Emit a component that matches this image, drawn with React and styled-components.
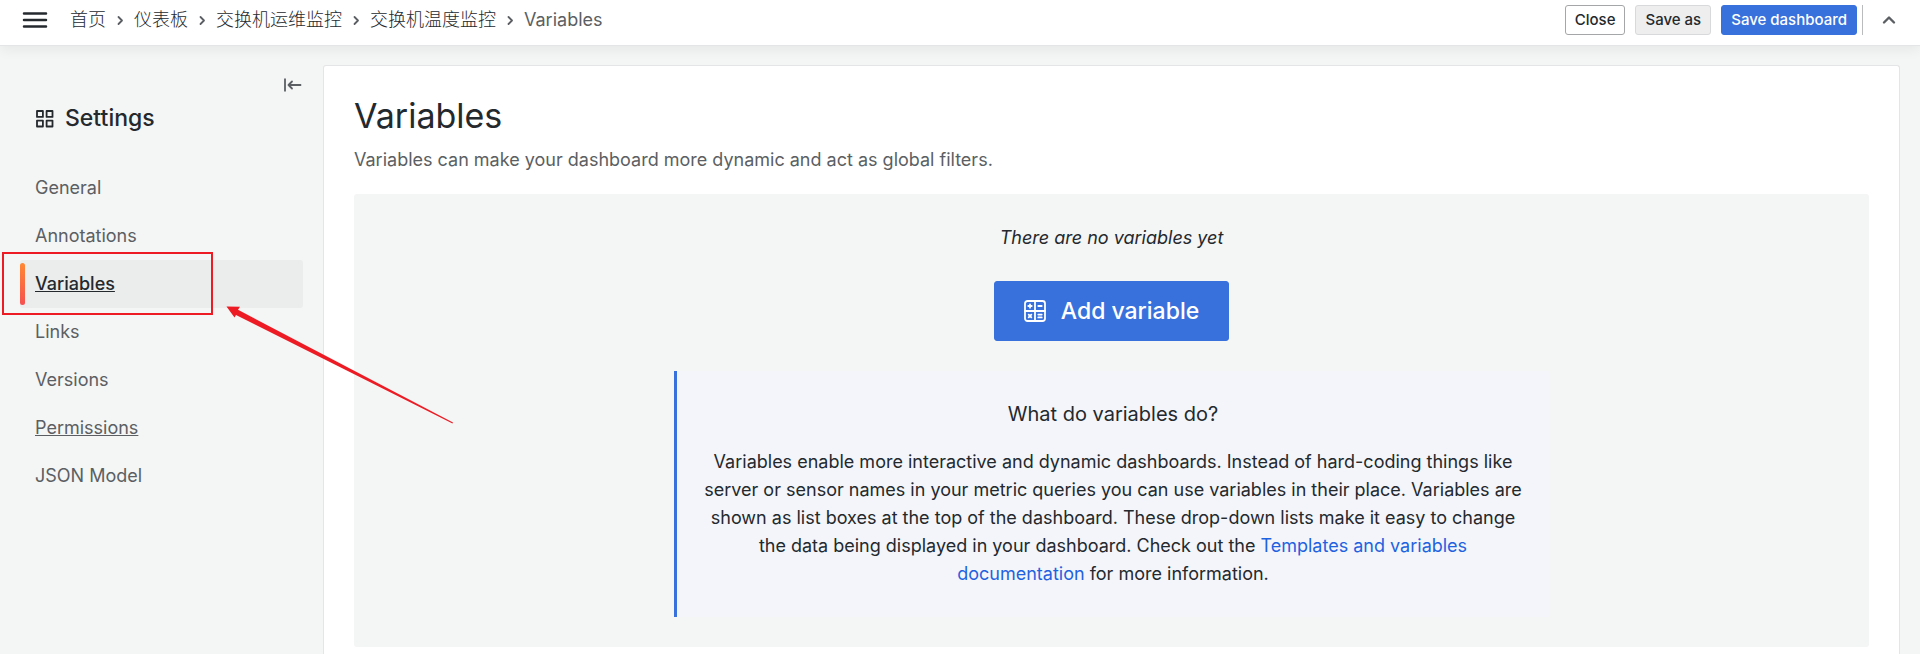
import React from "react";
import styled, { createGlobalStyle } from "styled-components";

const GlobalStyle = createGlobalStyle`
  *, *::before, *::after { box-sizing: border-box; }
  body {
    margin: 0;
    background: #f4f5f5;
    color: #24292e;
    font-family: Inter, "Noto Sans CJK SC", sans-serif;
    font-size: 18px;
    line-height: 28px;
  }
  button { font: inherit; color: inherit; cursor: pointer; }
  h1, h2, h3, p, ul, ol { margin: 0; padding: 0; font-weight: 400; }
  ul, ol { list-style: none; }
`;

const Page = styled.div`
  display: flex;
  flex-direction: column;
  min-height: 100vh;
`;

const TopBar = styled.header`
  position: relative;
  display: flex;
  align-items: center;
  justify-content: space-between;
  height: 46px;
  padding: 0 24px 5px 20px;
  background: #fff;
  border-bottom: 1px solid #e4e5e6;
  box-shadow: 0 4px 12px rgba(0, 0, 0, 0.06);
`;

const IconButton = styled.button`
  display: flex;
  align-items: center;
  justify-content: center;
  padding: 0;
  border: 0;
  background: none;
  color: ${(p) => (p.$muted ? "#5b5f63" : "#24292e")};
`;

const BarGroup = styled.div`
  display: flex;
  align-items: center;
  gap: ${(p) => p.$gap}px;
`;

const Crumbs = styled.ol`
  display: flex;
  align-items: center;
`;

const Crumb = styled.li`
  display: flex;
  align-items: center;
  color: ${(p) => (p.$current ? "#5b5f63" : "#24292e")};
  a { color: inherit; font-weight: 300; text-decoration: none; }
  svg { margin: 0 9px; color: #5b5f63; }
`;

const variants = {
  outline: "background: #fff; border-color: #a4a6a8;",
  secondary: "background: #eeeeee; border-color: #d8d9da;",
  primary: "background: #3871dc; border-color: #3871dc; color: #fff;",
};

const Button = styled.button`
  display: inline-flex;
  align-items: center;
  justify-content: center;
  gap: 15px;
  height: ${(p) => (p.$large ? 60 : 30)}px;
  padding: 0 ${(p) => (p.$large ? 29 : 9)}px;
  border: 1px solid;
  border-radius: 3px;
  font-size: ${(p) => (p.$large ? 23 : 15)}px;
  font-weight: 500;
  ${(p) => variants[p.$variant]}
`;

const Divider = styled.span`
  width: 1px;
  height: 30px;
  margin: 0 19px 0 5px;
  background: #b9bbbc;
`;

const Body = styled.div`
  flex: 1;
  display: flex;
  padding: 19px 20px 0 0;
`;

const Sidebar = styled.aside`
  flex: 0 0 323px;
  padding: 10px 20px 0;
`;

const SidebarTop = styled.div`
  display: flex;
  justify-content: flex-end;
  height: 20px;
`;

const SidebarTitle = styled.h2`
  display: flex;
  align-items: center;
  gap: 11px;
  margin: 9px 0 32px;
  padding-left: 15px;
  font-size: 23px;
  font-weight: 500;
`;

const NavItem = styled.li`
  position: relative;
  display: flex;
  align-items: center;
  height: 48px;
  padding-left: 15px;
  border-radius: 3px;
  background: ${(p) => (p.$active ? "#ebecec" : "transparent")};
`;

const NavLink = styled.a`
  font-weight: ${(p) => (p.$active ? 500 : 400)};
  color: ${(p) => (p.$active ? "#24292e" : "#5b5f63")};
  text-decoration: ${(p) => (p.$underlined ? "underline" : "none")};
`;

const ActiveBar = styled.span`
  position: absolute;
  left: 0;
  top: 3px;
  bottom: 3px;
  width: 5px;
  border-radius: 3px;
  background: linear-gradient(#ff8833, #f55050);
`;

const Markup = styled.svg`
  position: absolute;
  left: -18px;
  top: -8px;
  z-index: 1;
  pointer-events: none;
`;

const Panel = styled.main`
  flex: 1;
  min-width: 0;
  padding: 30px 30px 0;
  background: #fff;
  border: 1px solid #e4e5e6;
  border-bottom: 0;
  border-radius: 3px 3px 0 0;
`;

const Title = styled.h1`
  font-size: 34px;
  line-height: 40px;
`;

const Subtitle = styled.p`
  margin: 10px 0 20px;
  color: #5b5f63;
`;

const EmptyState = styled.section`
  display: flex;
  flex-direction: column;
  align-items: center;
  gap: 30px;
  padding: 30px;
  background: #f4f5f5;
  border-radius: 3px;
`;

const EmptyText = styled.p`
  font-style: italic;
  line-height: 27px;
`;

const InfoBox = styled.div`
  width: 100%;
  max-width: 876px;
  padding: 29px 27px;
  border-left: 3px solid #3871dc;
  background: #f3f5fa;
  text-align: center;
`;

const InfoTitle = styled.h3`
  margin-bottom: 20px;
  font-size: 20px;
`;

const TextLink = styled.a`
  color: #1f62e0;
  text-decoration: none;
`;

const MenuIcon = () => (
  <svg width="30" height="30" viewBox="0 0 30 30" fill="none" stroke="currentColor" strokeWidth="2.5" strokeLinecap="round">
    <path d="M4 8.5h22M4 15h22M4 21.5h22" />
  </svg>
);

const CrumbArrow = () => (
  <svg width="10" height="12" viewBox="0 0 10 12" fill="none" stroke="currentColor" strokeWidth="1.8" strokeLinecap="round" strokeLinejoin="round">
    <path d="M3.5 3l3.5 3.5L3.5 10" />
  </svg>
);

const ChevronUp = () => (
  <svg width="14" height="12" viewBox="0 0 14 12" fill="none" stroke="currentColor" strokeWidth="2.4" strokeLinecap="round" strokeLinejoin="round">
    <path d="M2 8.5l5-5 5 5" />
  </svg>
);

const CollapseIcon = () => (
  <svg width="20" height="20" viewBox="0 0 20 20" fill="none" stroke="currentColor" strokeWidth="1.8">
    <path d="M2 3.5v13" />
    <path d="M17.5 10H5.500M9 6.500L5.500 10L9 13.500" strokeLinecap="round" strokeLinejoin="round" />
  </svg>
);

const AppsIcon = () => (
  <svg width="19" height="19" viewBox="0 0 19 19" fill="none" stroke="currentColor" strokeWidth="1.8" strokeLinejoin="round">
    <path d="M2 2h5.900v5.900H2zM11.600 2h5.900v5.900h-5.900zM2 11.600h5.900v5.900H2zM11.600 11.600h5.900v5.900h-5.900z" />
  </svg>
);

const CalculatorIcon = () => (
  <svg width="22" height="22" viewBox="0 0 22 22" fill="none" stroke="currentColor" strokeWidth="1.8" strokeLinecap="round">
    <rect x="1" y="1" width="20" height="20" rx="2.500" />
    <path d="M11 1v20M1 11h20" />
    <path d="M4.300 6h3.400M6 4.300v3.400M14.300 6h3.400M4.700 14.700l2.600 2.600M7.300 14.700l-2.600 2.600M14.300 14.600h3.400M14.300 17.400h3.400" />
  </svg>
);

const crumbs = ["首页", "仪表板", "交换机运维监控", "交换机温度监控"];

const sections = [
  { label: "General" },
  { label: "Annotations" },
  { label: "Variables", active: true, underlined: true },
  { label: "Links" },
  { label: "Versions" },
  { label: "Permissions", underlined: true },
  { label: "JSON Model" },
];

export default function App() {
  return (
    <Page>
      <GlobalStyle />
      <TopBar>
        <BarGroup $gap={20}>
          <IconButton aria-label="Menu"><MenuIcon /></IconButton>
          <nav aria-label="Breadcrumbs">
            <Crumbs>
              {crumbs.map((name) => (
                <Crumb key={name}>
                  <a href="#">{name}</a>
                  <CrumbArrow />
                </Crumb>
              ))}
              <Crumb $current aria-current="page">Variables</Crumb>
            </Crumbs>
          </nav>
        </BarGroup>
        <BarGroup $gap={0}>
          <BarGroup $gap={10}>
            <Button $variant="outline">Close</Button>
            <Button $variant="secondary">Save as</Button>
            <Button $variant="primary">Save dashboard</Button>
          </BarGroup>
          <Divider />
          <IconButton $muted aria-label="Hide top bar"><ChevronUp /></IconButton>
        </BarGroup>
      </TopBar>
      <Body>
        <Sidebar>
          <SidebarTop>
            <IconButton $muted aria-label="Collapse settings"><CollapseIcon /></IconButton>
          </SidebarTop>
          <SidebarTitle><AppsIcon />Settings</SidebarTitle>
          <nav aria-label="Settings">
            <ul>
              {sections.map(({ label, active, underlined }) => (
                <NavItem key={label} $active={active}>
                  {active && <ActiveBar />}
                  <NavLink href="#" $active={active} $underlined={underlined}>{label}</NavLink>
                  {active && (
                    <Markup width="454" height="174" viewBox="0 0 454 174" aria-hidden="true">
                      <rect x="1" y="1" width="209" height="61" fill="none" stroke="#ed1c24" strokeWidth="2" />
                      <path d="M224.500 54.500L238 54.800L236 57.800L451 170.500L450.500 171.500L234 63L232.500 65.500Z" fill="#ed1c24" />
                    </Markup>
                  )}
                </NavItem>
              ))}
            </ul>
          </nav>
        </Sidebar>
        <Panel>
          <Title>Variables</Title>
          <Subtitle>Variables can make your dashboard more dynamic and act as global filters.</Subtitle>
          <EmptyState>
            <EmptyText>There are no variables yet</EmptyText>
            <Button $variant="primary" $large><CalculatorIcon />Add variable</Button>
            <InfoBox>
              <InfoTitle>What do variables do?</InfoTitle>
              <p>
                Variables enable more interactive and dynamic dashboards. Instead of hard-coding things like
                server or sensor names in your metric queries you can use variables in their place. Variables are
                shown as list boxes at the top of the dashboard. These drop-down lists make it easy to change
                the data being displayed in your dashboard. Check out
                the <TextLink href="#">Templates and variables documentation</TextLink> for more information.
              </p>
            </InfoBox>
          </EmptyState>
        </Panel>
      </Body>
    </Page>
  );
}
